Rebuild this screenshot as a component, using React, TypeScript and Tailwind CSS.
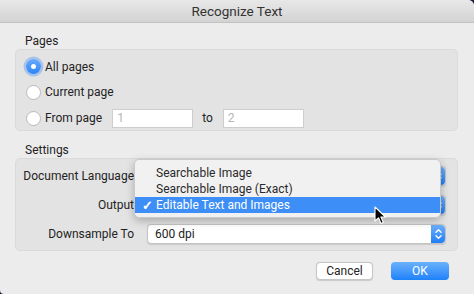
import React from 'react';

const Stepper = () => (
  <div className="flex h-full w-[14px] items-center justify-center rounded-r-[4px] bg-gradient-to-b from-[#6aaefb] to-[#1f7ef5]">
    <svg width="7" height="12" viewBox="0 0 7 12" fill="none" stroke="white" strokeWidth="1.4" strokeLinecap="round" strokeLinejoin="round">
      <path d="M1 4.2 L3.5 1.7 L6 4.2" />
      <path d="M1 7.8 L3.5 10.3 L6 7.8" />
    </svg>
  </div>
);

const Select = ({ value }: { value?: string }) => (
  <div className="flex h-[20px] flex-1 items-stretch rounded-[4px] border border-[#c4c4c4] bg-white shadow-[0_0.5px_1px_rgba(0,0,0,0.12)]">
    <div className="flex flex-1 items-center pl-[7px] text-[#222]">{value}</div>
    <Stepper />
  </div>
);

const Radio = ({ checked, label }: { checked?: boolean; label: string }) => (
  <div className="flex h-[24px] items-center gap-[4px] whitespace-nowrap">
    {checked ? (
      <div className="flex h-[15px] w-[15px] items-center justify-center rounded-full bg-gradient-to-b from-[#68abfa] to-[#2a84f6] shadow-[0_0_0_2.5px_rgba(120,170,240,0.55)]">
        <div className="h-[5px] w-[5px] rounded-full bg-white" />
      </div>
    ) : (
      <div className="h-[15px] w-[15px] rounded-full border border-[#b9b9b9] bg-white" />
    )}
    <span>{label}</span>
  </div>
);

const Field = ({ v }: { v: string }) => (
  <div className="flex h-[19px] w-[81px] items-center border border-[#cdcdcd] bg-white pl-[4px] text-[#b5b5b5]">{v}</div>
);

export default function App() {
  return (
    <div className="h-[294px] w-[474px] bg-[#1b1b45]" style={{ fontFamily: 'Roboto, "Noto Sans", sans-serif' }}>
      <div className="relative h-full w-full overflow-hidden rounded-tr-[6px] rounded-bl-[4px] bg-[#ececec] text-[12px] text-[#232323]">
        {/* Title bar */}
        <div className="flex h-[23px] items-center justify-center border-b border-[#c2c2c2] bg-gradient-to-b from-[#e8e8e8] to-[#d3d3d3] text-[13.5px] text-[#333]">
          Recognize Text
        </div>

        <div className="px-[15px] pr-[16px]">
          <div className="mt-[10px] h-[16px] pl-[10px] leading-[16px]">Pages</div>
          <div className="flex h-[82px] flex-col gap-[2px] rounded-[5px] border border-[#dadada] bg-[#e3e3e3] pl-[10px] pt-[5px]">
            <Radio checked label="All pages" />
            <Radio label="Current page" />
            <div className="flex h-[24px] items-center">
              <Radio label="From page" />
              <div className="ml-[10px]"><Field v="1" /></div>
              <span className="ml-[9px] mr-[10px]">to</span>
              <Field v="2" />
            </div>
          </div>

          <div className="mt-[11px] h-[16px] pl-[10px] leading-[16px]">Settings</div>
          <div className="relative flex h-[93px] flex-col gap-[9px] rounded-[5px] border border-[#dadada] bg-[#e3e3e3] pr-[11px] pt-[7px]">
            <div className="flex h-[20px] items-center gap-[13px]">
              <div className="w-[118px] whitespace-nowrap text-right">Document Language</div>
              <Select />
            </div>
            <div className="flex h-[20px] items-center gap-[13px]">
              <div className="w-[118px] whitespace-nowrap text-right">Output</div>
              <Select />
            </div>
            <div className="flex h-[20px] items-center gap-[13px]">
              <div className="w-[118px] whitespace-nowrap text-right">Downsample To</div>
              <Select value="600 dpi" />
            </div>

            {/* Popup menu */}
            <div className="absolute left-[118px] top-[0px] w-[307px] rounded-[5px] border border-[#c9c9c9] bg-[#f1f1f1] pb-[4px] pt-[5px] shadow-[0_3px_8px_rgba(0,0,0,0.25)]">
              <div className="flex h-[16px] items-center pl-[21px] text-[#2a2a2a]">Searchable Image</div>
              <div className="flex h-[16px] items-center pl-[21px] text-[#2a2a2a]">Searchable Image (Exact)</div>
              <div className="relative flex h-[16px] items-center bg-[#3d8ef6] pl-[21px] text-white">
                <span className="absolute left-[7px] top-[-1px] text-[13px] font-bold">✓</span>
                Editable Text and Images
              </div>
            </div>
          </div>

          <div className="mt-[11px] flex justify-end gap-[18px] pr-[9px]">
            <div className="flex h-[18px] w-[57px] items-center justify-center rounded-[4px] border border-[#c6c6c6] bg-white shadow-[0_0.5px_1px_rgba(0,0,0,0.15)]">Cancel</div>
            <div className="flex h-[18px] w-[58px] items-center justify-center rounded-[4px] bg-gradient-to-b from-[#69b1fb] to-[#1b81fa] text-white">OK</div>
          </div>
        </div>

        {/* Mouse cursor */}
        <svg className="absolute left-[374px] top-[206px]" width="13" height="19" viewBox="0 0 13 19">
          <path d="M1 1 L1 15 L4.5 11.8 L7 17.5 L9.3 16.5 L6.9 11 L11.5 11 Z" fill="black" stroke="white" strokeWidth="1.1" strokeLinejoin="round" />
        </svg>
      </div>
    </div>
  );
}
